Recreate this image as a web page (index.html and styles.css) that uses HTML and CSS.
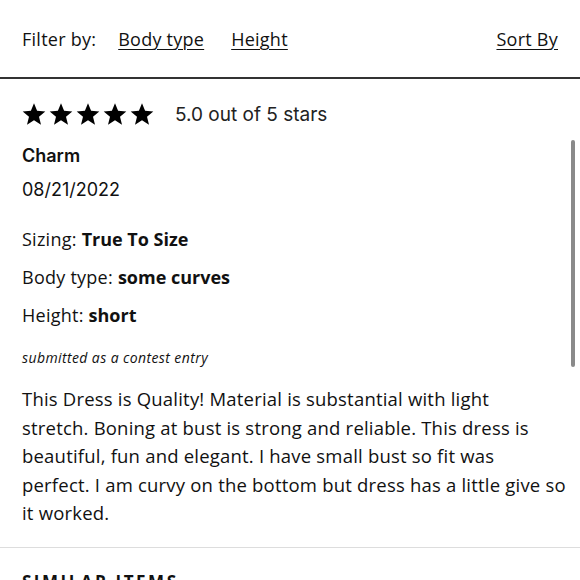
FILE: index.html
```html
<!DOCTYPE html>
<html>
<head>
<meta charset="utf-8">
<link rel="stylesheet" href="styles.css">
</head>
<body>
<div class="page">
  <header class="filters">
    <div class="filter-group">
      <span class="filter-label">Filter by:</span>
      <a class="link">Body type</a>
      <a class="link">Height</a>
    </div>
    <a class="link">Sort By</a>
  </header>
  <section class="review">
    <div class="rating">
      <div class="stars">
        <svg class="star" viewBox="0 0 24 24"><path d="M12 1.2l3.1 7.6 8.2.6-6.3 5.3 2 8-7-4.4-7 4.4 2-8L.7 9.4l8.2-.6z"/></svg>
        <svg class="star" viewBox="0 0 24 24"><path d="M12 1.2l3.1 7.6 8.2.6-6.3 5.3 2 8-7-4.4-7 4.4 2-8L.7 9.4l8.2-.6z"/></svg>
        <svg class="star" viewBox="0 0 24 24"><path d="M12 1.2l3.1 7.6 8.2.6-6.3 5.3 2 8-7-4.4-7 4.4 2-8L.7 9.4l8.2-.6z"/></svg>
        <svg class="star" viewBox="0 0 24 24"><path d="M12 1.2l3.1 7.6 8.2.6-6.3 5.3 2 8-7-4.4-7 4.4 2-8L.7 9.4l8.2-.6z"/></svg>
        <svg class="star" viewBox="0 0 24 24"><path d="M12 1.2l3.1 7.6 8.2.6-6.3 5.3 2 8-7-4.4-7 4.4 2-8L.7 9.4l8.2-.6z"/></svg>
      </div>
      <span class="rating-text">5.0 out of 5 stars</span>
    </div>
    <div class="author">Charm</div>
    <div class="date">08/21/2022</div>
    <div class="attrs">
      <div class="attr">Sizing: <b>True To Size</b></div>
      <div class="attr">Body type: <b>some curves</b></div>
      <div class="attr">Height: <b>short</b></div>
    </div>
    <div class="note">submitted as a contest entry</div>
    <p class="body">This Dress is Quality! Material is substantial with light<br>stretch. Boning at bust is strong and reliable. This dress is<br>beautiful, fun and elegant. I have small bust so fit was<br>perfect. I am curvy on the bottom but dress has a little give so<br>it worked.</p>
  </section>
  <section class="similar">
    <h2 class="similar-title">SIMILAR ITEMS</h2>
  </section>
  <div class="scrollbar"></div>
</div>
</body>
</html>
```
FILE: styles.css
```css
html, body {
  margin: 0;
  padding: 0;
  background: #fff;
}
body {
  font-family: "Open Sans", "Lato", sans-serif;
  color: #111;
  overflow: hidden;
}
.page {
  position: relative;
  width: 580px;
  height: 580px;
  overflow: hidden;
}
.filters {
  height: 79px;
  box-sizing: border-box;
  display: flex;
  align-items: center;
  justify-content: space-between;
  padding: 0 22px;
  border-bottom: 2px solid #333;
  font-size: 18px;
  letter-spacing: 0.25px;
}
.filter-group {
  display: flex;
  align-items: center;
}
.filter-label {
  margin-right: 22px;
}
.filter-group .link + .link {
  margin-left: 27px;
}
.link {
  text-decoration: underline;
  text-underline-offset: 3px;
  text-decoration-thickness: 1px;
  color: #111;
}
.review {
  padding: 23px 8px 0 22px;
  border-bottom: 1px solid #ddd;
  height: 469px;
  box-sizing: border-box;
}
.rating {
  display: flex;
  align-items: center;
  gap: 21px;
  height: 24px;
}
.stars {
  display: flex;
  gap: 3px;
}
.star {
  width: 24px;
  height: 24px;
  fill: #000;
}
.rating-text {
  font-family: "Inter", sans-serif;
  font-size: 19px;
  color: #222;
}
.author {
  font-family: "Inter", sans-serif;
  font-weight: 600;
  font-size: 18px;
  line-height: 24px;
  margin-top: 18px;
}
.date {
  font-family: "Inter", sans-serif;
  font-size: 18px;
  line-height: 24px;
  margin-top: 10px;
}
.attrs {
  margin-top: 25px;
  display: flex;
  flex-direction: column;
  gap: 14px;
  font-size: 18px;
  line-height: 24px;
  letter-spacing: 0.25px;
}
.attr b {
  font-weight: 700;
  letter-spacing: 0;
}
.note {
  font-style: italic;
  font-size: 14px;
  line-height: 18px;
  margin-top: 22px;
  letter-spacing: 0.4px;
}
.body {
  margin: 18px 0 0 0;
  font-size: 18.5px;
  line-height: 28.5px;
  letter-spacing: 0.2px;
  white-space: nowrap;
}
.similar {
  padding: 22px 22px 0 22px;
}
.similar-title {
  margin: 0;
  font-size: 17px;
  font-weight: 700;
  letter-spacing: 2.5px;
}
.scrollbar {
  position: absolute;
  right: 5px;
  top: 140px;
  width: 4px;
  height: 227px;
  border-radius: 2px;
  background: #8a8a8a;
}
```
